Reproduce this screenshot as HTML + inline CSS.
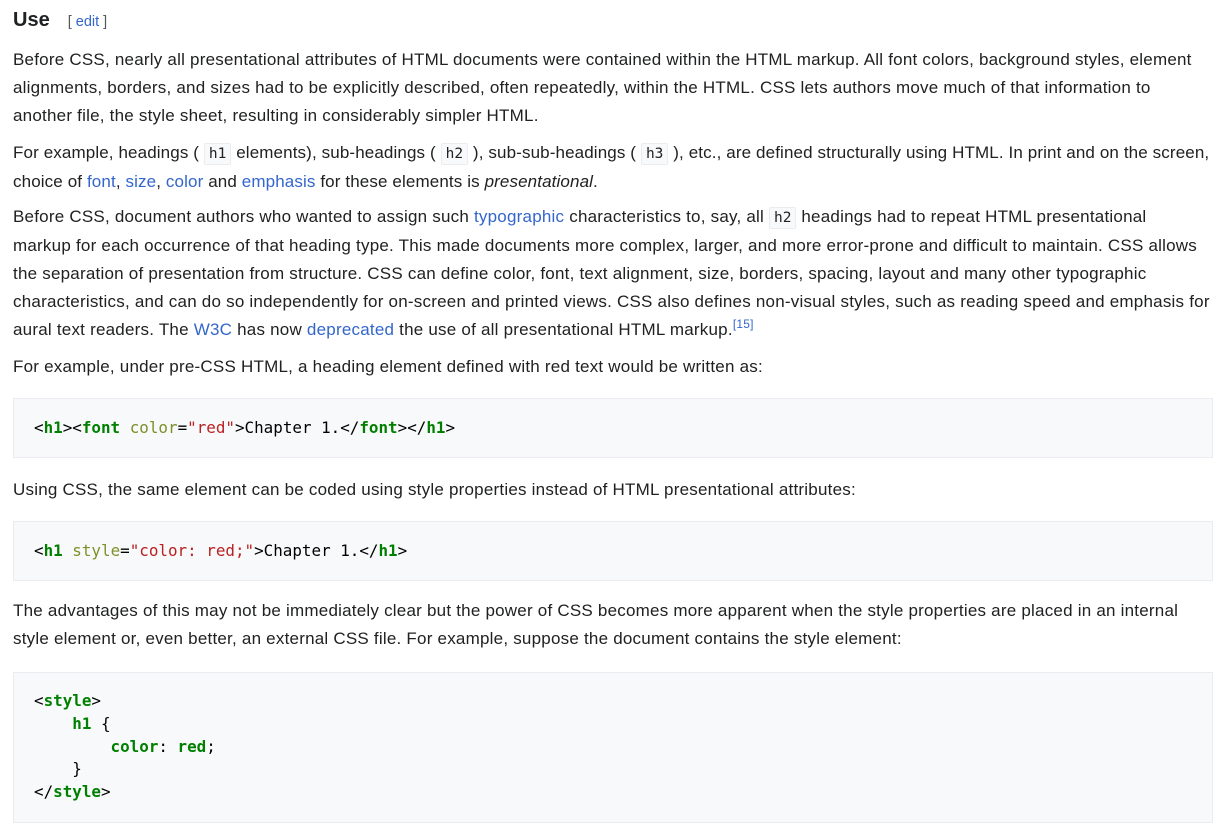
<!DOCTYPE html>
<html><head><meta charset="utf-8"><style>
html,body{margin:0;padding:0;background:#fff;width:1227px;height:835px;overflow:hidden}
body{font-family:"Liberation Sans",Arial,sans-serif;font-size:17px;letter-spacing:0.22px;color:#202122;position:relative}
.b{position:absolute;left:13px;line-height:28px;white-space:nowrap}
a{color:#3366cc;text-decoration:none}
code{font-family:"DejaVu Sans Mono",monospace;font-size:14.5px;letter-spacing:0;background:#f8f9fa;border:1px solid #eaecf0;border-radius:2px;padding:2px 4px}
.pre{position:absolute;left:13px;width:1200px;background:#f8f9fa;border:1px solid #eaecf0;font-family:"DejaVu Sans Mono",monospace;font-size:15.9px;letter-spacing:0;white-space:pre;box-sizing:border-box;padding-left:20px;color:#000}
.t{color:#008000;font-weight:bold}.at{color:#7d9029}.s{color:#ba2121}
h2{position:absolute;left:13px;top:6px;margin:0;font-size:20px;letter-spacing:0;font-weight:bold;line-height:28px}
.ed{font-size:14.5px;font-weight:normal;color:#54595d;margin-left:18px}
sup{font-size:12px;line-height:0;vertical-align:7px}
</style></head><body>
<h2>Use<span class="ed">[ <a>edit</a> ]</span></h2>
<div class="b" style="top:46px">Before CSS, nearly all presentational attributes of HTML documents were contained within the HTML markup. All font colors, background styles, element<br>alignments, borders, and sizes had to be explicitly described, often repeatedly, within the HTML. CSS lets authors move much of that information to<br>another file, the style sheet, resulting in considerably simpler HTML.</div>
<div class="b" style="top:139px;letter-spacing:0.12px">For example, headings ( <code>h1</code> elements), sub-headings ( <code>h2</code> ), sub-sub-headings ( <code>h3</code> ), etc., are defined structurally using HTML. In print and on the screen,<br>choice of <a>font</a>, <a>size</a>, <a>color</a> and <a>emphasis</a> for these elements is <i>presentational</i>.</div>
<div class="b" style="top:203px">Before CSS, document authors who wanted to assign such <a>typographic</a> characteristics to, say, all <code>h2</code> headings had to repeat HTML presentational<br>markup for each occurrence of that heading type. This made documents more complex, larger, and more error-prone and difficult to maintain. CSS allows<br>the separation of presentation from structure. CSS can define color, font, text alignment, size, borders, spacing, layout and many other typographic<br>characteristics, and can do so independently for on-screen and printed views. CSS also defines non-visual styles, such as reading speed and emphasis for<br>aural text readers. The <a>W3C</a> has now <a>deprecated</a> the use of all presentational HTML markup.<sup><a>[15]</a></sup></div>
<div class="b" style="top:353px">For example, under pre-CSS HTML, a heading element defined with red text would be written as:</div>
<div class="pre" style="top:398px;height:60px;line-height:58px">&lt;<span class="t">h1</span>&gt;&lt;<span class="t">font</span> <span class="at">color</span>=<span class="s">"red"</span>&gt;Chapter 1.&lt;/<span class="t">font</span>&gt;&lt;/<span class="t">h1</span>&gt;</div>
<div class="b" style="top:476px">Using CSS, the same element can be coded using style properties instead of HTML presentational attributes:</div>
<div class="pre" style="top:521px;height:60px;line-height:58px">&lt;<span class="t">h1</span> <span class="at">style</span>=<span class="s">"color: red;"</span>&gt;Chapter 1.&lt;/<span class="t">h1</span>&gt;</div>
<div class="b" style="top:597px">The advantages of this may not be immediately clear but the power of CSS becomes more apparent when the style properties are placed in an internal<br>style element or, even better, an external CSS file. For example, suppose the document contains the style element:</div>
<div class="pre" style="top:672px;height:151px;line-height:22.8px;padding-top:17px">&lt;<span class="t">style</span>&gt;
    <span class="t">h1</span> {
        <span class="t">color</span>: <span class="t">red</span>;
    }
&lt;/<span class="t">style</span>&gt;</div>
</body></html>
